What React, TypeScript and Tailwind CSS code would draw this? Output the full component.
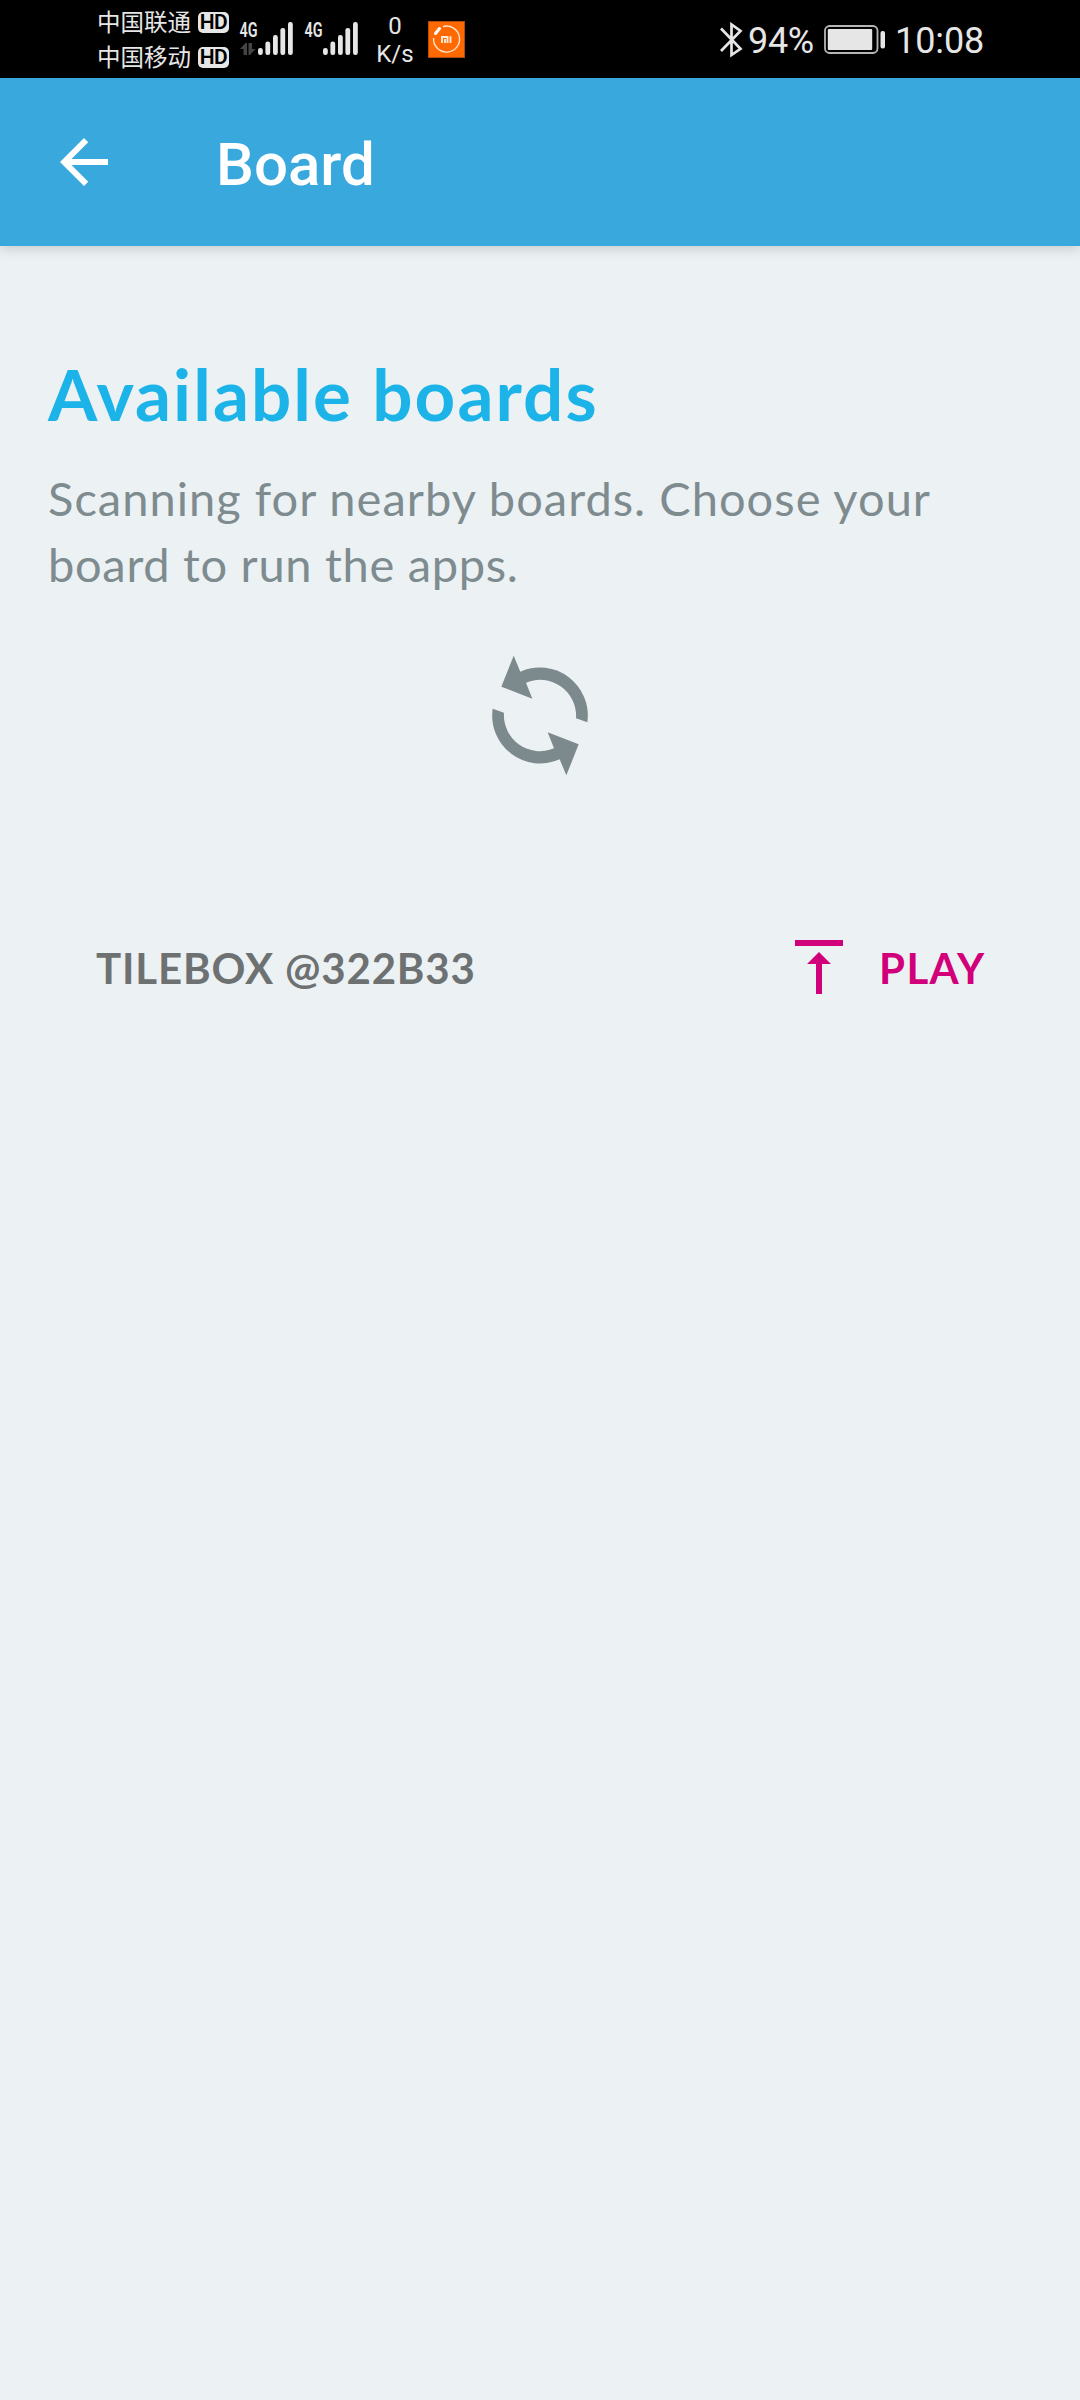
const carriers = ['中国联通', '中国移动'];

const bars = [
  { x: 18, y: 26, h: 7 },
  { x: 25.4, y: 19.5, h: 13.5 },
  { x: 33, y: 13, h: 20 },
  { x: 40.4, y: 6, h: 27 },
  { x: 48, y: 0, h: 33 },
];

function HdBadge() {
  return (
    <span className="flex h-[21px] w-[31px] items-center justify-center rounded-[5px] bg-[#e6e6e6] font-['Roboto',sans-serif] text-[21px] font-semibold leading-none tracking-[-0.5px] text-black">
      HD
    </span>
  );
}

function Signal({ data }: { data?: boolean }) {
  return (
    <svg width="54" height="41" viewBox="-1 -8 54 41" className="shrink-0" fill="#e6e6e6">
      <text
        x="-0.5"
        y="14.5"
        textLength="18"
        lengthAdjust="spacingAndGlyphs"
        className="font-['Roboto',sans-serif] text-[20.5px] font-semibold"
      >
        4G
      </text>
      {bars.map((bar) => (
        <rect key={bar.x} x={bar.x} y={bar.y} width="4.8" height={bar.h} rx="2.2" />
      ))}
      {data && <path d="M0 27l5.5-6H7v12H3.5v-6zM15.5 27L10 33H8.5V21H12v6z" fill="#444" />}
    </svg>
  );
}

function StatusBar() {
  return (
    <div className="flex h-[78px] items-start bg-black font-['Roboto','Noto_Sans_CJK_SC',sans-serif] text-[#e6e6e6]">
      <div className="ml-[97px] mt-[5px] w-[142px]">
        {carriers.map((name) => (
          <div key={name} className="flex h-[35px] items-center">
            <span className="w-[101px] whitespace-nowrap pt-[3px] text-[23.5px] leading-none">{name}</span>
            <HdBadge />
          </div>
        ))}
      </div>
      <div className="mt-[14px] flex gap-[11px]">
        <Signal data />
        <Signal />
      </div>
      <div className="ml-[17px] mt-3 w-[40px] text-center text-[24px] leading-[28px]">
        <div>0</div>
        <div>K/s</div>
      </div>
      <svg width="37" height="37" viewBox="0 0 37 37" className="ml-[13px] mt-[21px]">
        <rect x="0.5" y="0.5" width="36" height="36" fill="#ff6900" stroke="#b04a10" />
        <path d="M15 5.6A13 13 0 1 1 5.6 17" fill="none" stroke="#ffe3cc" strokeWidth="1.4" />
        <path d="M7.5 12.5l4-5" stroke="#fff" strokeWidth="3" strokeLinecap="round" />
        <path d="M14 22v-6h5.5v6M17 22v-4M22.5 15.3V22" fill="none" stroke="#ffe9d8" strokeWidth="1.9" />
      </svg>
      <svg width="24" height="36" viewBox="0 0 24 36" className="ml-[254px] mt-[22px]" fill="none" stroke="#e6e6e6" strokeWidth="2.7">
        <path d="M2 6.5l19.5 20.3-9 6.2V2.5l9 6.5L2 29" />
      </svg>
      <span className="ml-[5px] mt-5 w-[76px] whitespace-nowrap text-[36px] leading-[42px] tracking-[-0.3px]">94%</span>
      <svg width="62" height="30" viewBox="0 0 62 30" className="mt-[25px]">
        <rect x="1" y="1" width="52.5" height="27" rx="4.5" fill="none" stroke="#b5b5b5" strokeWidth="1.8" />
        <rect x="3.8" y="4" width="44.4" height="21" rx="1" fill="#e6e6e6" />
        <rect x="56.5" y="6" width="4.5" height="17.5" rx="2" fill="#e6e6e6" />
      </svg>
      <span className="ml-[9px] mt-5 whitespace-nowrap text-[36px] leading-[42px] tracking-[-0.1px]">10:08</span>
    </div>
  );
}

function AppBar() {
  return (
    <header className="flex h-[168px] items-center bg-[#39a8dc] text-white shadow-[0_2px_12px_rgba(0,0,0,0.18)]">
      <svg width="72" height="72" viewBox="0 0 24 24" fill="currentColor" className="ml-12">
        <path d="M20 11H7.83l5.59-5.59L12 4l-8 8 8 8 1.41-1.41L7.83 13H20v-2z" />
      </svg>
      <h1 className="ml-[96px] mt-[6px] font-['Roboto',sans-serif] text-[60px] font-medium leading-[70px]">Board</h1>
    </header>
  );
}

function BoardRow({ name }: { name: string }) {
  return (
    <div className="mt-[155px] flex h-[72px] items-center px-12 text-[42px] font-bold leading-[72px]">
      <span className="flex-1 whitespace-nowrap pt-[2px] tracking-[0.82px] text-[#6e7172]">{name}</span>
      <button className="flex items-center text-[#d1007a]">
        <svg width="72" height="72" viewBox="0 0 24 24" fill="currentColor">
          <path d="M8 11h3v10h2V11h3l-4-4-4 4zM4 3v2h16V3H4z" />
        </svg>
        <span className="ml-6 w-[105px] whitespace-nowrap pt-[2px] text-left tracking-[1.4px]">PLAY</span>
      </button>
    </div>
  );
}

export default function App() {
  return (
    <div className="flex h-[2400px] w-[1080px] flex-col overflow-hidden bg-[#ecf1f4]">
      <StatusBar />
      <AppBar />
      <main className="px-12 font-['Lato',sans-serif]">
        <h2 className="mt-[104px] whitespace-nowrap text-[71px] font-bold leading-[88px] tracking-[2.05px] text-[#1bb3e8]">
          Available boards
        </h2>
        <p className="mt-[27px] whitespace-nowrap text-[47px] leading-[66px] text-[#7e8b8f]">
          <span className="tracking-[1.02px]">Scanning for nearby boards. Choose your</span>
          <br />
          <span className="tracking-[0.7px]">board to run the apps.</span>
        </p>
        <svg width="96" height="121" viewBox="66 43 288 363" fill="#7c898d" className="mx-auto mt-[58px]">
          <path d="M151 93A144 144 0 0 1 352 245L318 233A108 108 0 0 0 168 126L187 174L94 138L131 45Z" />
          <path
            d="M151 93A144 144 0 0 1 352 245L318 233A108 108 0 0 0 168 126L187 174L94 138L131 45Z"
            transform="rotate(180 210 224.5)"
          />
        </svg>
        <BoardRow name="TILEBOX @322B33" />
      </main>
    </div>
  );
}
